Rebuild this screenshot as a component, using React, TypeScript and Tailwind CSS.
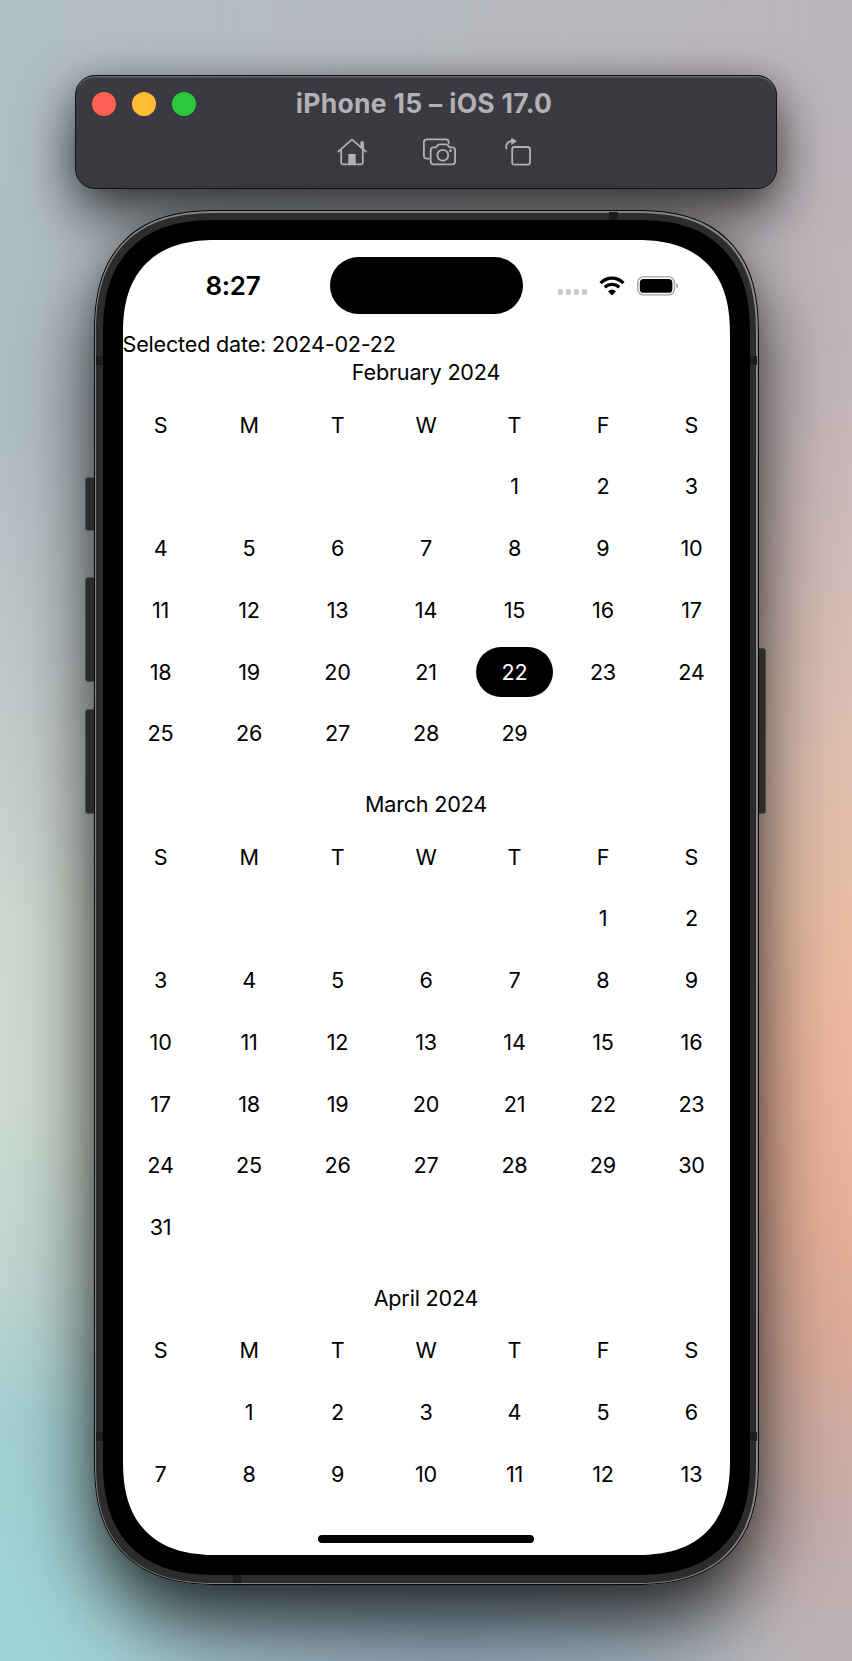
const WEEKDAYS = ["S", "M", "T", "W", "T", "F", "S"];

type MonthData = { title: string; offset: number; days: number; selected?: number };

const MONTHS: MonthData[] = [
  { title: "February 2024", offset: 4, days: 29, selected: 22 },
  { title: "March 2024", offset: 5, days: 31 },
  { title: "April 2024", offset: 1, days: 13 },
];

const CELL = "flex h-[49.4px] items-center justify-center";

function Month({ title, offset, days, selected }: MonthData) {
  return (
    <section className="mb-[31px]">
      <h2 className="mb-[12.8px] h-[30px] text-center leading-[30px]">{title}</h2>
      <div className="grid grid-cols-7 gap-[12.36px]">
        {WEEKDAYS.map((day, i) => (
          <div key={i} className={CELL}>{day}</div>
        ))}
        {Array.from({ length: offset }, (_, i) => (
          <div key={`blank-${i}`} className={CELL} />
        ))}
        {Array.from({ length: days }, (_, i) => i + 1).map((day) => (
          <div
            key={day}
            className={day === selected ? `${CELL} rounded-full bg-black text-white` : CELL}
          >
            {day}
          </div>
        ))}
      </div>
    </section>
  );
}

function HomeIcon() {
  return (
    <svg width="30" height="28" viewBox="0 0 30 28" fill="none" stroke="#b3b1b8" strokeWidth="1.8" strokeLinecap="round" strokeLinejoin="round">
      <path d="M1.2 13.6 14.2 2.1Q15 1.4 15.8 2.1L28.8 13.6" />
      <path d="M4.2 11.5V24.5Q4.2 26.4 6.1 26.4H23.9Q25.8 26.4 25.8 24.5V11.5" />
      <path d="M24.3 9V4.2H26V10.5" />
      <path d="M11.3 26V16.9Q11.3 16 12.2 16H17.8Q18.7 16 18.7 16.9V26Z" fill="#b3b1b8" stroke="none" />
    </svg>
  );
}

function CameraIcon() {
  return (
    <svg width="33" height="28" viewBox="0 0 33 28" fill="none" stroke="#b3b1b8" strokeWidth="1.8" strokeLinecap="round" strokeLinejoin="round">
      <path d="M6 20.6H3.6Q.9 20.6.9 17.9V4.1Q.9 1.4 3.6 1.4H22.8Q25.7 1.4 25.7 4.4V5" />
      <path d="M7.7 12.2Q7.7 9.3 10.6 9.3H12.3Q13.2 9.3 13.8 8.4L14.7 7.2Q15.4 6.3 16.6 6.3H23Q24.2 6.3 24.9 7.2L25.8 8.4Q26.4 9.3 27.3 9.3H29.2Q32.1 9.3 32.1 12.2V23.6Q32.1 26.4 29.2 26.4H10.6Q7.7 26.4 7.7 23.6Z" />
      <circle cx="19.8" cy="17.2" r="5.4" />
      <circle cx="27.5" cy="12.7" r="1.4" fill="#b3b1b8" stroke="none" />
    </svg>
  );
}

function RotateIcon() {
  return (
    <svg width="26" height="28" viewBox="0 0 26 28" fill="none" stroke="#b3b1b8" strokeWidth="1.8" strokeLinecap="round" strokeLinejoin="round">
      <rect x="7.2" y="9" width="17.8" height="17.6" rx="2.4" />
      <path d="M1.2 10.4V9Q1.3 3.4 7 3.2" />
      <path d="M6.8.4 11.4 3.3 6.8 6.2Z" fill="#b3b1b8" strokeWidth=".8" />
    </svg>
  );
}

function WifiIcon() {
  return (
    <svg width="26" height="20" viewBox="0 0 26 20" fill="none" stroke="#000" strokeWidth="3.3">
      <path d="M1.6 7.1Q6.6 2.1 13 2.1T24.4 7.1" />
      <path d="M5.7 11.3Q9 8.4 13 8.4T20.3 11.3" />
      <path d="M9 15.2Q13 11.9 17 15.2L13 19.4Z" fill="#000" stroke="none" />
    </svg>
  );
}

function BatteryIcon() {
  return (
    <svg width="42" height="20" viewBox="0 0 42 20">
      <rect x=".7" y=".9" width="36.8" height="18" rx="5.8" fill="none" stroke="#a3a3a3" strokeWidth="1.4" />
      <rect x="2.8" y="3" width="32.6" height="13.8" rx="3.9" fill="#000" />
      <path d="M39.3 7.2Q41.4 8.1 41.4 9.9T39.3 12.6Z" fill="#a3a3a3" />
    </svg>
  );
}

function Toolbar() {
  return (
    <header className="relative flex h-[114px] w-[702px] flex-col rounded-[20px] border border-[#101214] bg-[#3b3a40] shadow-[inset_0_1.5px_0_#626467,0_24px_56px_rgba(0,0,0,0.72),0_0_26px_rgba(0,0,0,0.12)]">
      <div className="grid h-[55px] grid-cols-[150px_1fr_170px] items-center pl-4">
        <div className="flex gap-4">
          <span className="size-6 rounded-full bg-[#ff5f57]" />
          <span className="size-6 rounded-full bg-[#febc2e]" />
          <span className="size-6 rounded-full bg-[#28c840]" />
        </div>
        <h1 className="-mt-px text-center text-[26.5px] leading-none font-bold tracking-[0.3px] whitespace-nowrap text-[#b3b1b8]">
          iPhone 15 – iOS 17.0
        </h1>
      </div>
      <div className="flex pt-[7px] pl-[261px]">
        <HomeIcon />
        <span className="ml-[56px]"><CameraIcon /></span>
        <span className="ml-[49px]"><RotateIcon /></span>
      </div>
    </header>
  );
}

function StatusBar() {
  return (
    <div className="flex h-[91px] shrink-0 items-center">
      <div className="w-[207px] pl-[83px] text-[26px] leading-none font-semibold tracking-[-0.3px]">8:27</div>
      <div className="h-[57px] w-[193px] rounded-full bg-black" />
      <div className="mt-[13px] ml-[35px] flex gap-[3px]">
        <span className="size-[5.2px] rounded-[1.5px] bg-[#cacaca]" />
        <span className="size-[5.2px] rounded-[1.5px] bg-[#cacaca]" />
        <span className="size-[5.2px] rounded-[1.5px] bg-[#cacaca]" />
        <span className="size-[5.2px] rounded-[1.5px] bg-[#cacaca]" />
      </div>
      <div className="ml-[12.2px]"><WifiIcon /></div>
      <div className="ml-[11.5px]"><BatteryIcon /></div>
    </div>
  );
}

/** Blurred desktop wallpaper: a left and a right colour column blended across the middle. */
function Wallpaper() {
  return (
    <div className="absolute inset-0 bg-[linear-gradient(180deg,#b3bfc6_0%,#b0bcc4_25%,#b9c4c7_35%,#c6cfcc_48%,#cdd9d0_57%,#cddacf_66%,#bed4d0_77%,#a2ced0_86%,#9fd2d6_97%)]">
      <div className="h-full bg-[linear-gradient(180deg,#bcb5bc_0%,#bfb5ba_20%,#cdbab8_32%,#dfbfb0_45%,#e8bda4_55%,#edb59b_65%,#e8b097_72%,#d8aa99_82%,#c4adac_92%,#bab2b6_100%)] [mask-image:linear-gradient(90deg,transparent_5%,black_95%)]" />
      <div className="absolute inset-0 bg-[radial-gradient(ellipse_340px_260px_at_53%_100%,#93aabb_0%,#93aabbb0_40%,#93aabb00_100%)]" />
    </div>
  );
}

const SQUIRCLE = "[corner-shape:superellipse(1.3)]";
const SIDE_BUTTON = "absolute w-3 bg-[#2c2c2c] border";
const BAND = "absolute bg-[#1d1d1d]";

export default function App() {
  return (
    <main
      className="relative isolate flex h-[1661px] w-[852px] flex-col items-center overflow-hidden text-black"
      style={{ fontFamily: 'Inter, "Liberation Sans", sans-serif' }}
    >
      <Wallpaper />
      <div className="relative flex flex-col items-center pt-[75px]">
        <Toolbar />
        <div className={`relative mt-[21px] h-[1375px] w-[665px] rounded-[123px] shadow-[0_36px_76px_rgba(0,0,0,0.78),0_0_22px_rgba(0,0,0,0.12)] ${SQUIRCLE}`}>
          <i className={`${SIDE_BUTTON} top-[267px] -left-[9px] h-[54px] rounded-l-[3px] border-[#4c4f50]`} />
          <i className={`${SIDE_BUTTON} top-[367px] -left-[9px] h-[105px] rounded-l-[3px] border-[#4c4f50]`} />
          <i className={`${SIDE_BUTTON} top-[499px] -left-[9px] h-[105px] rounded-l-[3px] border-[#4c4f50]`} />
          <i className={`${SIDE_BUTTON} top-[438px] -right-[7px] h-[166px] rounded-r-[3px] border-[#4c4846]`} />

          <div className={`relative h-full rounded-[123px] bg-[#050505] p-px ${SQUIRCLE}`}>
            <div className={`h-full rounded-[122px] bg-[#858585] p-[1.5px] ${SQUIRCLE}`}>
              <div className={`h-full rounded-[120.5px] bg-[#2c2c2c] px-[6.5px] py-[7.5px] ${SQUIRCLE}`}>
                <div className={`h-full rounded-[114px] bg-black p-[20px] ${SQUIRCLE}`}>
                  <div className={`flex h-full flex-col overflow-hidden rounded-[95px] bg-white text-[21.6px] tracking-[-0.2px] ${SQUIRCLE}`}>
                    <StatusBar />
                    <p className="h-[26.4px] shrink-0 leading-[26.4px]">Selected date: 2024-02-22</p>
                    <div className="min-h-0 flex-1 overflow-hidden">
                      {MONTHS.map((month) => (
                        <Month key={month.title} {...month} />
                      ))}
                    </div>
                    <div className="flex h-[52px] shrink-0 justify-center pt-[32px]">
                      <div className="h-[7.5px] w-[216px] rounded-full bg-black" />
                    </div>
                  </div>
                </div>
              </div>
            </div>
            <i className={`${BAND} top-[146px] left-[2px] h-[9px] w-[7px]`} />
            <i className={`${BAND} top-[146px] right-[2px] h-[9px] w-[7px]`} />
            <i className={`${BAND} top-[1222px] left-[2px] h-[9px] w-[7px]`} />
            <i className={`${BAND} top-[1222px] right-[2px] h-[9px] w-[7px]`} />
            <i className={`${BAND} top-[2px] left-[515px] h-[8px] w-[9px]`} />
            <i className={`${BAND} bottom-[2px] left-[139px] h-[8px] w-[9px]`} />
          </div>
        </div>
      </div>
    </main>
  );
}
